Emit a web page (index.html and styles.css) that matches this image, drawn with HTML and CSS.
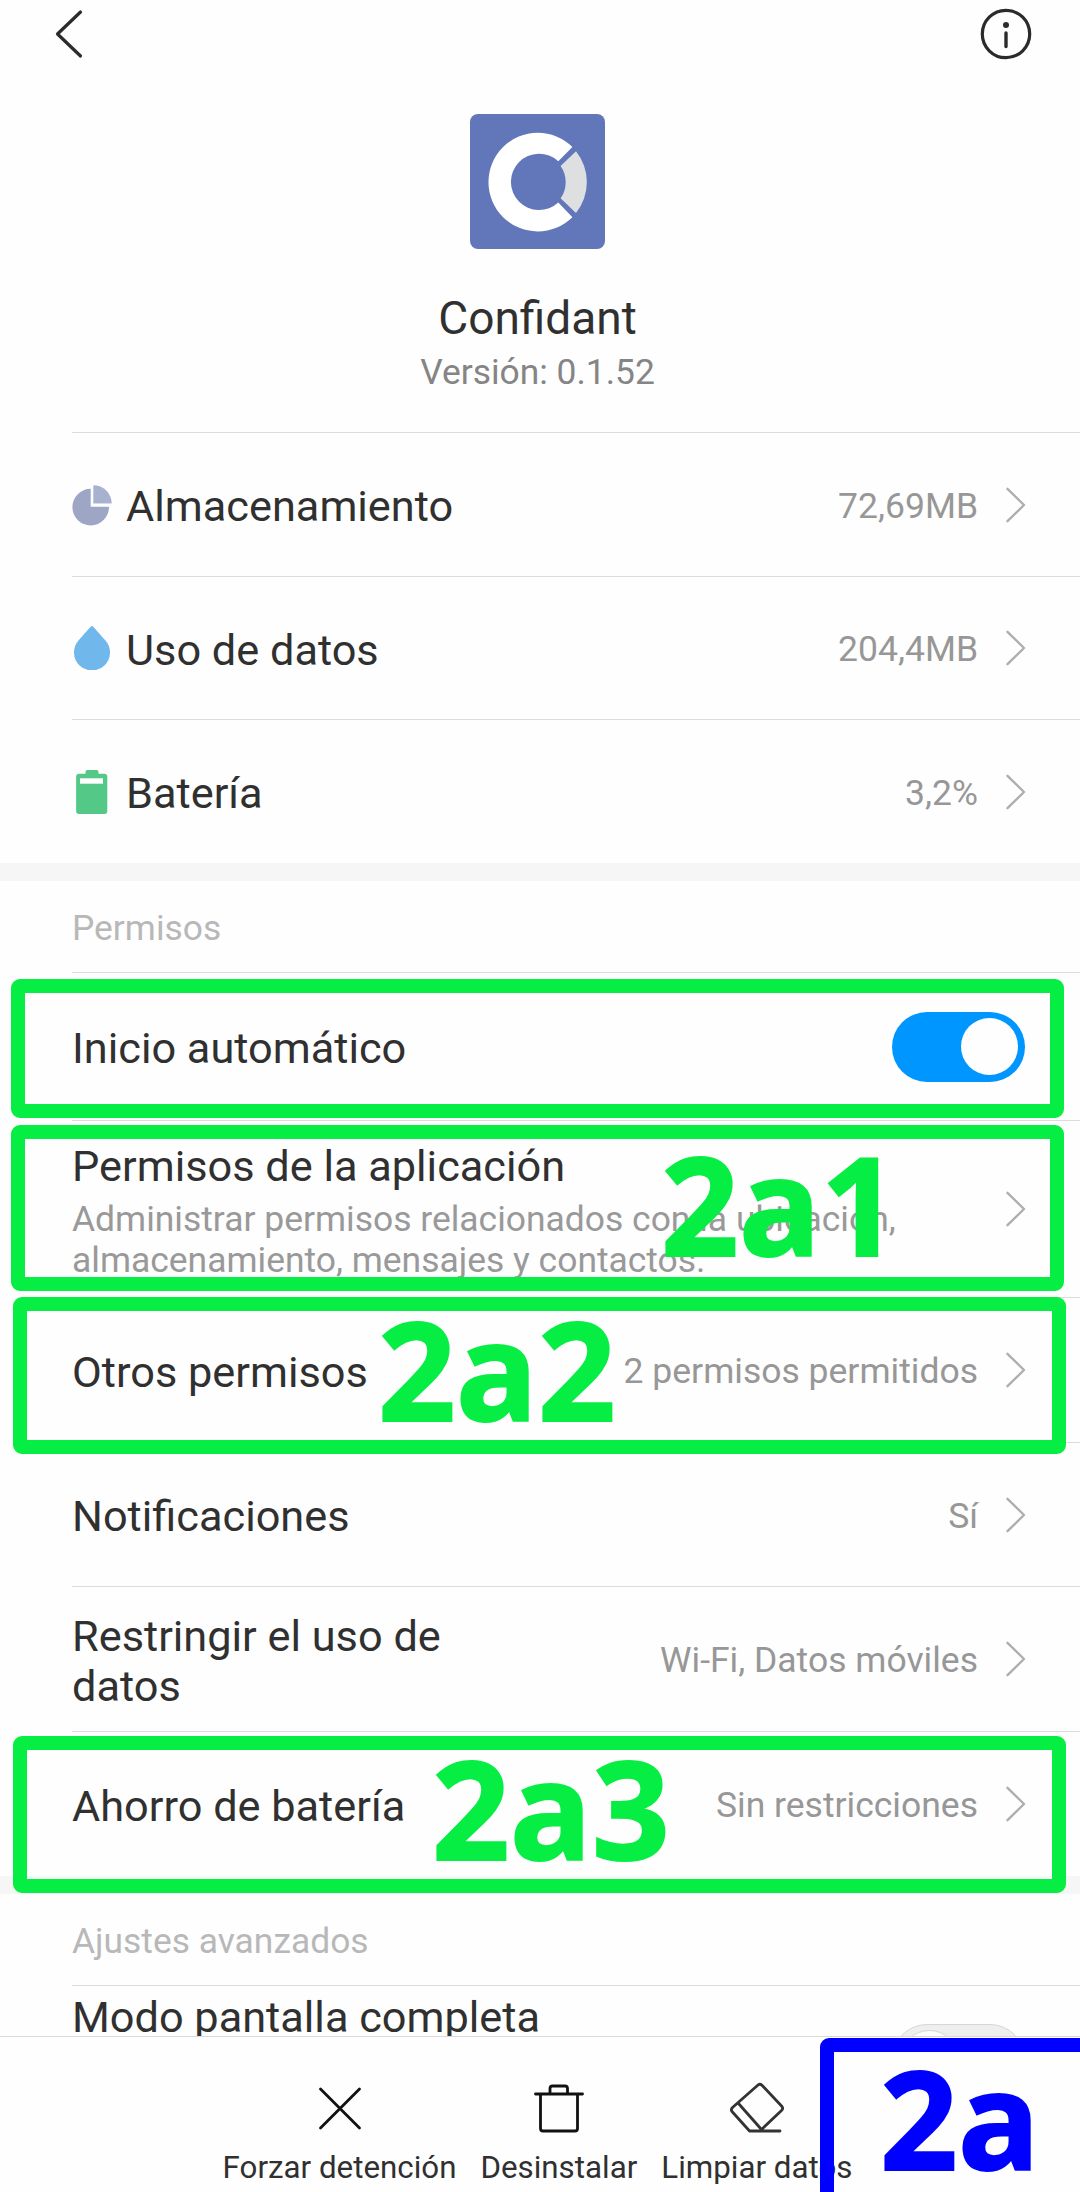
FILE: index.html
```html
<!DOCTYPE html>
<html lang="es">
<head>
<meta charset="utf-8">
<title>Confidant</title>
<link rel="stylesheet" href="styles.css">
</head>
<body>
<svg class="defs" width="0" height="0" aria-hidden="true">
  <symbol id="chevron" viewBox="0 0 20 36"><path d="M1.500 1.800 18 18 1.500 34.200" fill="none" stroke="#aeaeae" stroke-width="2.400" stroke-linecap="round" stroke-linejoin="round"/></symbol>
</svg>
<div class="screen">
  <main class="content">
    <header class="topbar">
      <svg class="back" width="30" height="52" viewBox="0 0 30 52"><path d="M27.500 4 4.500 26l23 22" fill="none" stroke="#2b2b2b" stroke-width="3.200" stroke-linecap="round" stroke-linejoin="round"/></svg>
      <svg class="info" width="52" height="52" viewBox="0 0 52 52"><circle cx="26" cy="26" r="23.700" fill="none" stroke="#2b2b2b" stroke-width="3.200"/><circle cx="26" cy="17" r="3" fill="#2b2b2b"/><path d="M26 25v13.500" stroke="#2b2b2b" stroke-width="3.400" stroke-linecap="round"/></svg>
    </header>
    <section class="app">
      <svg class="logo" width="135" height="135" viewBox="0 0 135 135">
        <rect width="135" height="135" rx="8" fill="#6277ba"/>
        <path d="M102.400 33A49.300 49.300 0 1 0 102.400 103.200L88.300 88.500A28.200 28.200 0 1 1 88.300 47.200Z" fill="#fff"/>
        <path d="M106 37.200A49.300 49.300 0 0 1 106 98.900L90.600 84.300A28.200 28.200 0 0 0 90.600 52Z" fill="#dddfe1"/>
      </svg>
      <h1 class="app-name">Confidant</h1>
      <p class="app-version">Versión: 0.1.52</p>
    </section>

    <section class="group">
      <div class="row">
        <svg class="icon" width="40" height="44" viewBox="0 0 40 44"><path d="M18.700 5.800V23.800H37A18.300 18.300 0 1 1 18.700 5.800Z" fill="#9ea6c6"/><path d="M21.300 2.200A18.400 18.400 0 0 1 39.700 20.600H21.300Z" fill="#a9b1d0"/></svg>
        <span class="label">Almacenamiento</span><span class="value">72,69MB</span><svg class="chev"><use href="#chevron"/></svg>
      </div>
      <div class="row row-short">
        <svg class="icon" width="40" height="44" viewBox="0 0 40 44"><path d="M20 0C21 0 22 1.500 33.500 14.500A18 18 0 1 1 6.500 14.500C18 1.500 19 0 20 0Z" fill="#70b8ec"/></svg>
        <span class="label">Uso de datos</span><span class="value">204,4MB</span><svg class="chev"><use href="#chevron"/></svg>
      </div>
      <div class="row">
        <svg class="icon" width="40" height="44" viewBox="0 0 40 44"><path d="M15.500 0h9a2 2 0 0 1 2 2v1.700h5.800a3 3 0 0 1 3 3V41a3 3 0 0 1-3 3H7.100a3 3 0 0 1-3-3V6.700a3 3 0 0 1 3-3h6.400V2a2 2 0 0 1 2-2Z" fill="#53c887"/><path d="M8 8.300h23v5.400H8z" fill="#fff"/></svg>
        <span class="label">Batería</span><span class="value">3,2%</span><svg class="chev"><use href="#chevron"/></svg>
      </div>
    </section>

    <h2 class="heading">Permisos</h2>
    <section class="group">
      <div class="row row-auto">
        <span class="label">Inicio automático</span><span class="toggle toggle-on"></span>
      </div>
      <div class="row row-apps">
        <div class="label">Permisos de la aplicación<p class="desc">Administrar permisos relacionados con la ubicación, almacenamiento, mensajes y contactos.</p></div><svg class="chev"><use href="#chevron"/></svg>
      </div>
      <div class="row row-tall">
        <span class="label">Otros permisos</span><span class="value">2 permisos permitidos</span><svg class="chev"><use href="#chevron"/></svg>
      </div>
      <div class="row">
        <span class="label">Notificaciones</span><span class="value">Sí</span><svg class="chev"><use href="#chevron"/></svg>
      </div>
      <div class="row row-tall">
        <span class="label label-narrow">Restringir el uso de datos</span><span class="value">Wi-Fi, Datos móviles</span><svg class="chev"><use href="#chevron"/></svg>
      </div>
      <div class="row row-tall">
        <span class="label">Ahorro de batería</span><span class="value">Sin restricciones</span><svg class="chev"><use href="#chevron"/></svg>
      </div>
    </section>

    <h2 class="heading">Ajustes avanzados</h2>
    <section class="group">
      <div class="row row-full">
        <span class="label">Modo pantalla completa</span><span class="toggle toggle-off"></span>
      </div>
    </section>
  </main>

  <footer class="actions">
    <div class="action">
      <svg width="54" height="52" viewBox="0 0 54 52"><path d="M7.500 7 46.500 46M46.500 7 7.500 46" stroke="#111" stroke-width="2.800" stroke-linecap="round"/></svg>
      <span>Forzar detención</span>
    </div>
    <div class="action">
      <svg width="54" height="52" viewBox="0 0 54 52" fill="none" stroke="#111" stroke-width="2.800" stroke-linecap="round" stroke-linejoin="round"><path d="M3.500 12H50.500M8.500 12V46.500q0 2.500 2.500 2.500H43q2.500 0 2.500-2.500V12M18 12V6.500q0-2.500 2.500-2.500H33q2.500 0 2.500 2.500V12"/></svg>
      <span>Desinstalar</span>
    </div>
    <div class="action">
      <svg width="54" height="52" viewBox="0 0 54 52" fill="none" stroke="#333" stroke-width="2.800" stroke-linecap="round" stroke-linejoin="round"><path d="M50 49H19.500L2 29.500q-1.500-2 .5-4L28 3q2-1.600 4 .3L52 24.500q1.500 2-.5 4L31.500 47.500 8.500 21.500"/></svg>
      <span>Limpiar datos</span>
    </div>
  </footer>

  <div class="mark mark-auto"></div>
  <div class="mark mark-apps"></div>
  <div class="mark mark-other"></div>
  <div class="mark mark-saver"></div>
  <div class="mark mark-more"></div>
  <span class="tag tag-apps">2a1</span>
  <span class="tag tag-other">2a2</span>
  <span class="tag tag-saver">2a3</span>
  <span class="tag tag-more">2a</span>
</div>
</body>
</html>
```
FILE: styles.css
```css
* { box-sizing: border-box; }

body {
  margin: 0;
  background: #fefefe;
  color: #303030;
  font-family: Roboto, "Noto Sans", sans-serif;
}

.defs { position: absolute; }

.screen {
  position: relative;
  display: flex;
  flex-direction: column;
  width: 1080px;
  height: 2192px;
  overflow: hidden;
}

.content {
  flex: none;
  height: 2036px;
  overflow: hidden;
}

.topbar {
  display: flex;
  justify-content: space-between;
  height: 114px;
  padding: 8px 48px 0 53px;
}

.app {
  display: flex;
  flex-direction: column;
  align-items: center;
  height: 318px;
  padding-right: 5px;
}

.logo { flex: none; }

.app-name {
  margin: 42px 0 0;
  font-size: 46px;
  font-weight: 400;
  line-height: 54px;
}

.app-version {
  margin: 6px 0 0;
  color: #858585;
  font-size: 35.4px;
  line-height: 42px;
}

.row {
  position: relative;
  display: flex;
  align-items: center;
  height: 144px;
  margin-left: 72px;
  padding-right: 54px;
  border-top: 1px solid #dcdcdc;
}

.row-short { height: 143px; }
.row-tall { height: 145px; }
.row-auto { height: 148px; padding-right: 55px; }
.row-apps { height: 177px; }
.row-full { height: 147px; align-items: flex-start; padding-right: 55px; }

.icon {
  flex: none;
  margin-right: 14px;
}

.label {
  flex: 1;
  padding-top: 6px;
  font-size: 43.3px;
  line-height: 50.4px;
  white-space: nowrap;
}

.label-narrow {
  flex: 0 1 400px;
  margin-right: auto;
  white-space: normal;
}

.row-full .label { padding-top: 7px; }

.desc {
  width: 860px;
  margin: 6px 0 0;
  color: #999;
  font-size: 35.45px;
  line-height: 41.5px;
  white-space: normal;
}

.value {
  padding-top: 2px;
  color: #979797;
  font-size: 35.5px;
  line-height: 42px;
  white-space: nowrap;
}

.chev {
  flex: none;
  width: 20px;
  height: 36px;
  margin-left: 28px;
}

.row-apps .chev { margin-left: 0; }

.heading {
  height: 109px;
  margin: 0;
  padding: 26px 0 0 72px;
  border-top: 18px solid #f6f6f6;
  color: #b8b8b8;
  font-size: 35.4px;
  font-weight: 400;
  line-height: 42px;
}

.toggle {
  display: flex;
  flex: none;
  align-items: center;
  width: 133px;
  height: 70px;
  padding: 0 7px;
  border-radius: 35px;
}

.toggle::before {
  content: "";
  width: 57px;
  height: 57px;
  border-radius: 50%;
  background: #fefefe;
}

.toggle-on {
  justify-content: flex-end;
  background: #0096ff;
}

.toggle-off {
  margin-top: 38px;
  border: 1px solid #d6d6d6;
  background: #eee;
}

.toggle-off::before { border: 1px solid #d6d6d6; }

.actions {
  display: flex;
  flex: 1;
  justify-content: center;
  gap: 24px;
  padding: 45px 5px 0 0;
  border-top: 1px solid #d9d9d9;
}

.action {
  display: flex;
  flex-direction: column;
  align-items: center;
  gap: 15px;
  font-size: 31.3px;
  line-height: 38px;
}

/* Highlight frames and step tags drawn over the settings list */
.mark {
  position: absolute;
  left: 11px;
  width: 1053px;
  border: 14px solid #06ee43;
  border-radius: 9px;
}

.mark-auto { top: 979px; height: 139px; }
.mark-apps { top: 1125px; height: 166px; }
.mark-other { top: 1297px; left: 13px; height: 157px; }
.mark-saver { top: 1736px; left: 13px; height: 157px; }

.mark-more {
  top: 2038px;
  left: 820px;
  width: 290px;
  height: 200px;
  border-color: #00f;
}

.tag {
  position: absolute;
  color: #06ee43;
  font: 700 136px/136px "Open Sans", "Noto Sans", sans-serif;
  -webkit-text-stroke: 2px currentColor;
}

.tag-apps { top: 1136px; left: 661px; }
.tag-other { top: 1301px; left: 378px; }
.tag-saver { top: 1740px; left: 432px; }
.tag-more { top: 2050px; left: 880px; color: #00f; }
```
